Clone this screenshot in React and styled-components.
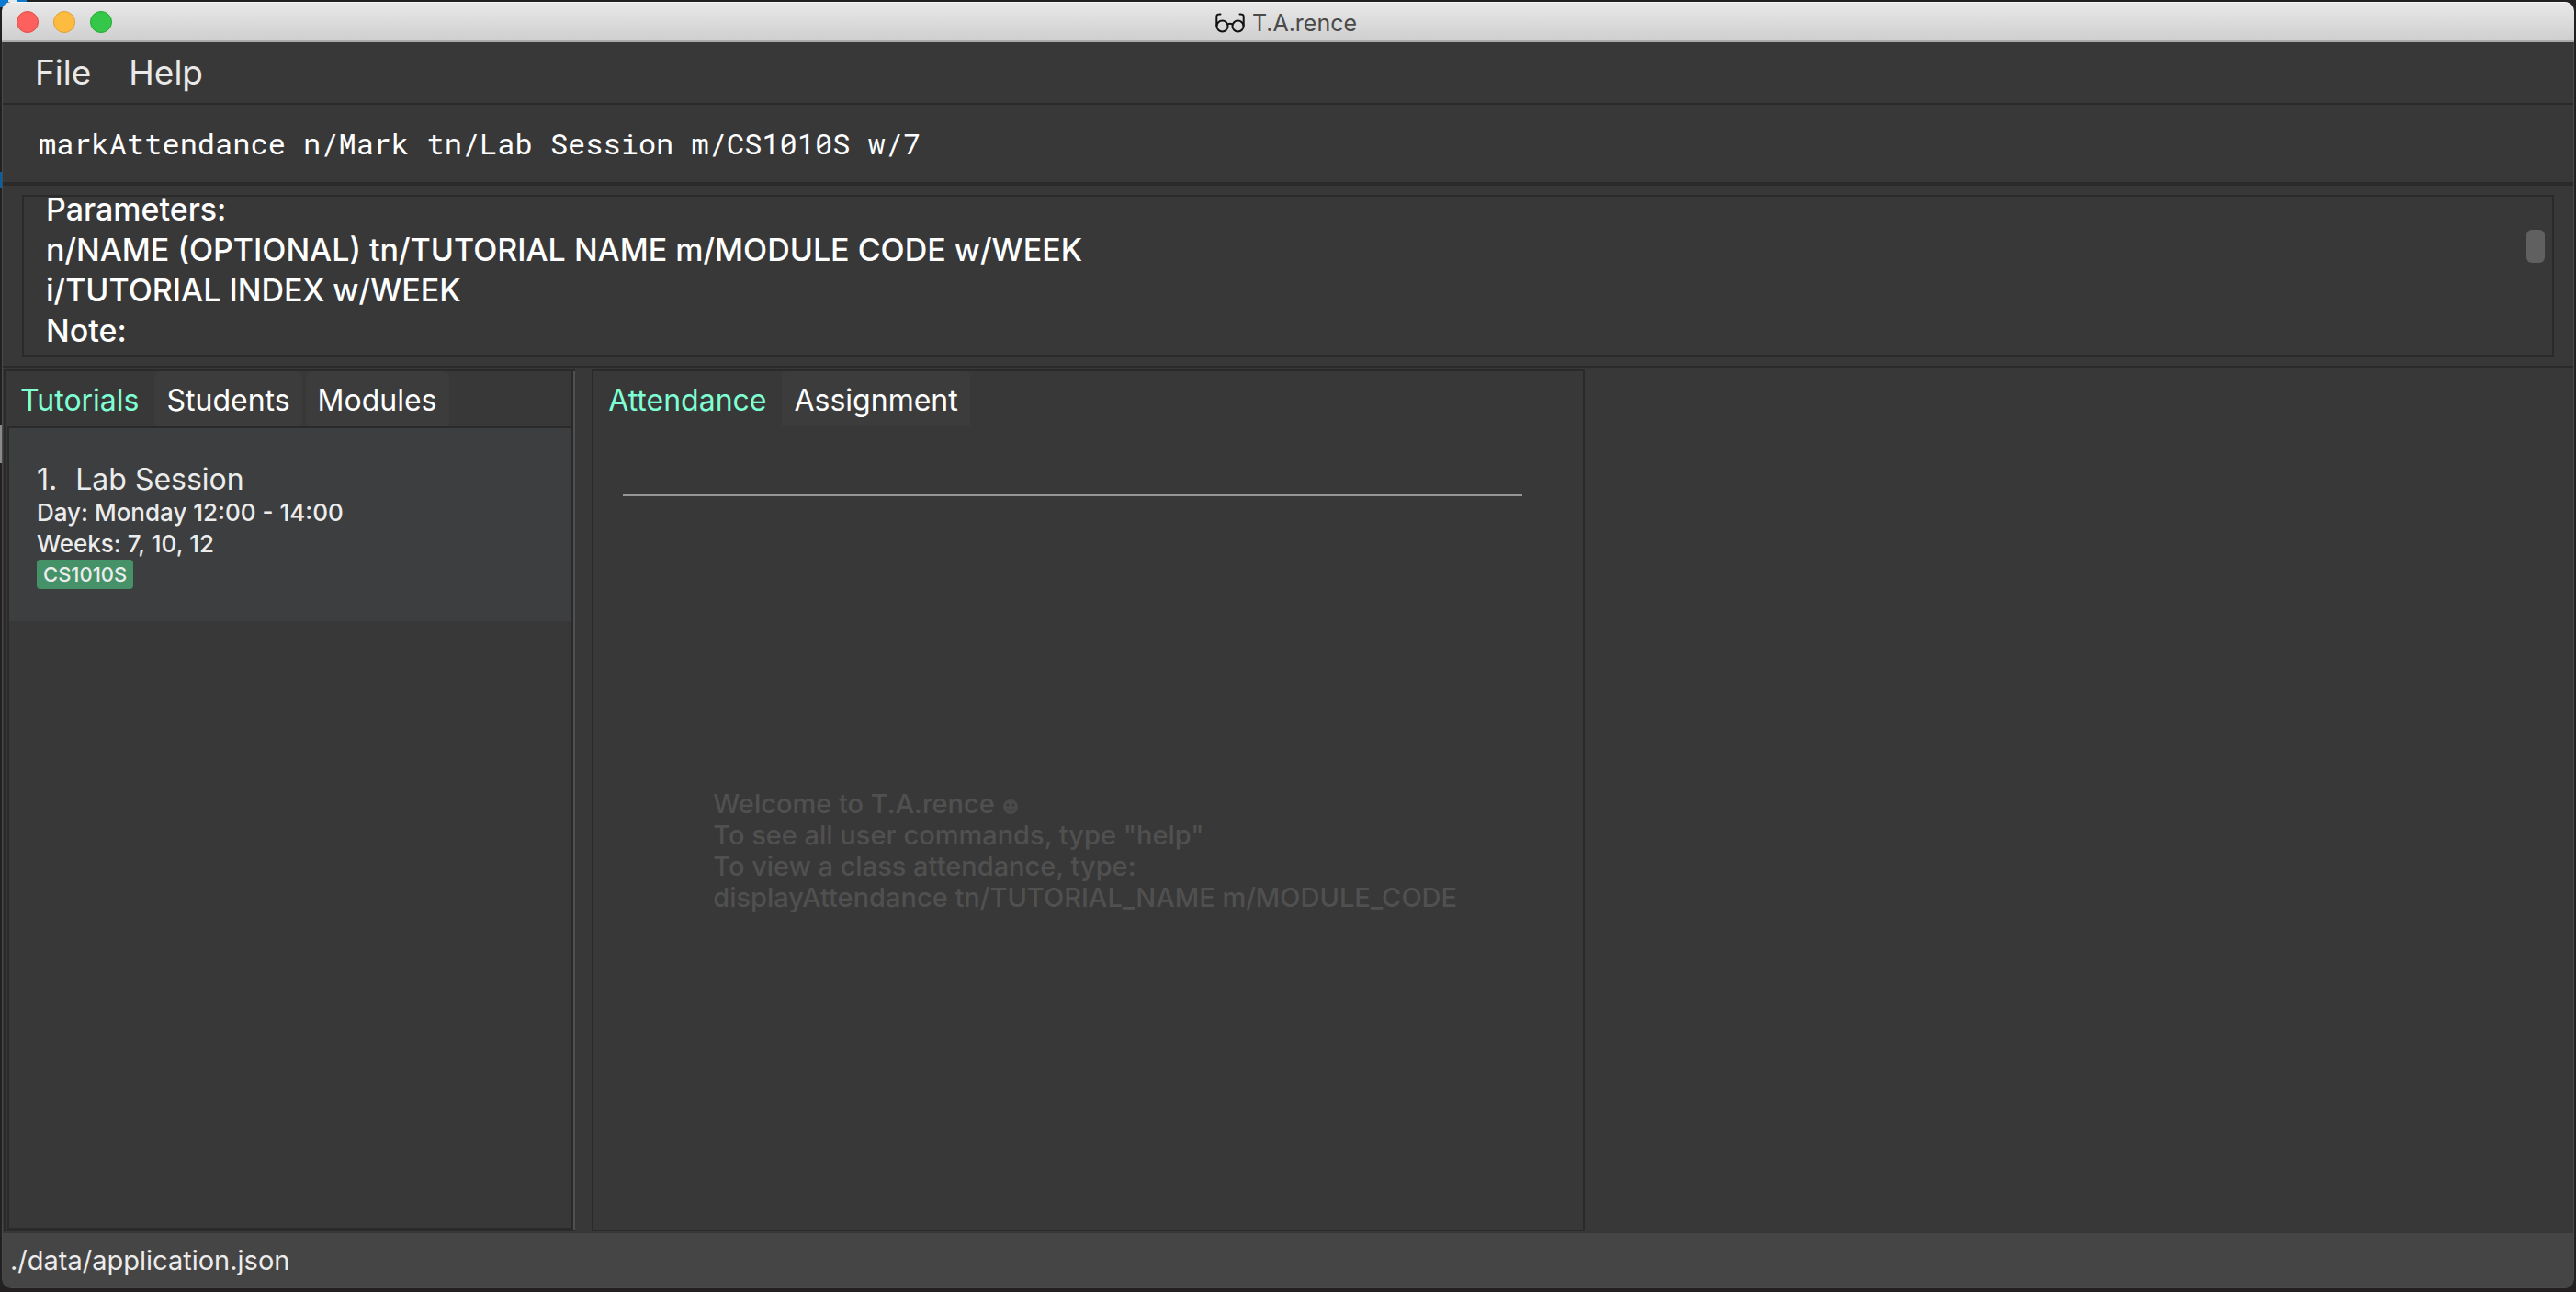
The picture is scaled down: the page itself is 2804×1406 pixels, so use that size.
import React, { useState } from 'react';
import styled, { createGlobalStyle } from 'styled-components';

const ink = '#383838';
const rule = '#2a2a2a';
const sans = "Inter, 'Liberation Sans', sans-serif";

const GlobalStyle = createGlobalStyle`
  * { box-sizing: border-box; }
  body { margin: 0; background: #1c1b1c; font-family: ${sans}; }
  button, input, textarea { font-family: inherit; }
  ul, p, h2 { margin: 0; padding: 0; }
`;

const Desktop = styled.div`
  display: flex;
  min-height: 100vh;
  padding: 2px 2px 4px;
  background:
    linear-gradient(90deg, #0a7bd0 0 9px, #dfe9f0 9px 18px, #0a7bd0 18px 29px, transparent 29px) 0 0 / 100% 2px no-repeat,
    linear-gradient(#0a7bd0, #0a7bd0) 0 0 / 8px 8px no-repeat,
    linear-gradient(#0a5f9e, #0a5f9e) 0 187px / 2px 18px no-repeat,
    linear-gradient(#8a8a8a, #8a8a8a) 0 462px / 2px 42px no-repeat,
    #222021;
`;

const Window = styled.main`
  display: flex;
  flex-direction: column;
  flex: 1;
  min-width: 0;
  border-radius: 10px;
  overflow: hidden;
  background: ${ink};
`;

const TitleBar = styled.header`
  display: grid;
  grid-template-columns: 1fr auto 1fr;
  align-items: center;
  height: 44px;
  padding: 0 16px;
  background: linear-gradient(#e8e8e8, #cfcfcf);
  border-top: 1px solid #f6f6f6;
  border-bottom: 2px solid #ababab;
`;

const Lights = styled.div`
  display: flex;
  gap: 16px;
`;

const Light = styled.button`
  width: 24px;
  height: 24px;
  padding: 0;
  border: 1px solid ${(p) => p.$edge};
  border-radius: 50%;
  background: ${(p) => p.$fill};
`;

const Title = styled.div`
  display: flex;
  align-items: center;
  gap: 8px;
  padding: 2px 4px 0 0;
  color: #4a4a4a;
  font-size: 25px;
  line-height: 32px;
`;

const Body = styled.div`
  display: flex;
  flex-direction: column;
  flex: 1;
  border: 1px solid #4a4a4a;
  border-top: 0;
  border-radius: 0 0 10px 10px;
  overflow: hidden;
`;

const MenuBar = styled.nav`
  display: flex;
  gap: 41px;
  height: 68px;
  padding: 0 35px 1px;
  border-bottom: 2px solid ${rule};
`;

const MenuButton = styled.button`
  padding: 0;
  border: 0;
  background: none;
  color: #e9e9e9;
  font-size: 37px;
`;

const CommandRow = styled.div`
  height: 88px;
  padding: 0 39px 2px;
  border-bottom: 4px solid ${rule};
`;

const CommandInput = styled.input`
  display: block;
  width: 100%;
  height: 100%;
  padding: 0;
  border: 0;
  outline: 0;
  background: none;
  color: #fff;
  && { font-family: 'Roboto Mono', 'Liberation Mono', monospace; }
  font-size: 32px;
`;

const ResultRow = styled.div`
  height: 198px;
  padding: 10px 21px;
  border-bottom: 2px solid ${rule};
`;

const ResultBox = styled.div`
  position: relative;
  display: flex;
  flex-direction: column;
  justify-content: flex-end;
  height: 176px;
  padding: 0 24px 4px;
  border: 2px solid ${rule};
  overflow: hidden;
`;

const ResultText = styled.textarea`
  flex: none;
  width: 100%;
  height: 176px;
  padding: 0;
  border: 0;
  outline: 0;
  resize: none;
  overflow: hidden;
  background: none;
  color: #fff;
  font-size: 34px;
  font-weight: 450;
  line-height: 44px;
`;

const ScrollThumb = styled.div`
  position: absolute;
  top: 36px;
  right: 8px;
  width: 20px;
  height: 36px;
  border-radius: 6px;
  background: #606060;
`;

const Panels = styled.div`
  display: grid;
  grid-template-columns: minmax(0, 622fr) minmax(0, 1080fr) minmax(0, 1058fr);
  column-gap: 18px;
  flex: 1;
  padding: 2px 0 2px 1px;
`;

const Sidebar = styled.section`
  display: flex;
  flex-direction: column;
  border: 2px solid ${rule};
  border-right: 0;
  box-shadow: inset -2px 0 #505050, inset -4px 0 ${rule};
  padding-right: 4px;
`;

const TabPane = styled.section`
  display: flex;
  flex-direction: column;
  border: 2px solid ${rule};
`;

const TabList = styled.div`
  display: flex;
  gap: 4px;
  height: 60px;
  padding-left: 3px;
`;

const Tab = styled.button`
  padding: 2px 13px 0;
  border: 0;
  border-radius: 6px 6px 0 0;
  background: ${(p) => (p.$active ? 'none' : '#3c3c3c')};
  color: ${(p) => (p.$active ? '#7fffd4' : '#fff')};
  font-size: 32px;
  font-weight: 400;
`;

const List = styled.ul`
  flex: 1;
  margin-left: 2px;
  border: 2px solid ${rule};
  border-right: 0;
  list-style: none;
`;

const Card = styled.li`
  height: 210px;
  padding: 37px 30px;
  background: #3c3e3f;
  color: #ececec;
`;

const CardTitle = styled.h2`
  display: flex;
  gap: 20px;
  font-size: 32px;
  font-weight: 400;
  line-height: 38px;
`;

const CardLine = styled.p`
  font-size: 26px;
  font-weight: 450;
  line-height: 34px;
`;

const Tag = styled.span`
  display: block;
  width: fit-content;
  padding: 0 7px;
  border-radius: 4px;
  background: #459168;
  font-size: 22px;
  font-weight: 450;
  line-height: 32px;
`;

const Content = styled.div`
  display: flex;
  flex-direction: column;
  flex: 1;
  padding: 74px 66px 0 32px;
`;

const Divider = styled.hr`
  width: 100%;
  height: 2px;
  margin: 0;
  border: 0;
  background: #969696;
`;

const Welcome = styled.div`
  margin: 318px 0 0 98px;
  color: #505050;
  font-size: 29px;
  font-weight: 450;
  line-height: 34px;
  white-space: nowrap;
`;

const Smile = styled.svg`
  margin-left: 8px;
  vertical-align: -1px;
`;

const StatusBar = styled.footer`
  height: 59px;
  padding: 0 8px;
  background: #454545;
  color: #ececec;
  font-size: 29px;
  line-height: 60px;
`;

const result = `Parameters:
n/NAME (OPTIONAL) tn/TUTORIAL NAME m/MODULE CODE w/WEEK
i/TUTORIAL INDEX w/WEEK
Note:`;

const tutorials = [
  { name: 'Lab Session', day: 'Monday 12:00 - 14:00', weeks: '7, 10, 12', module: 'CS1010S' },
];

function Glasses() {
  return (
    <svg width="32" height="22" viewBox="0 0 32 22" fill="none" stroke="#111" strokeWidth="2" strokeLinecap="round" aria-hidden="true">
      <circle cx="7.5" cy="14.5" r="6" />
      <circle cx="24.5" cy="14.5" r="6" />
      <path d="M13.500 12.500q2.500-1.500 5 0M1.300 14V4Q1.300 1.200 5.500 1.500M30.700 14V4Q30.700 1.200 26.500 1.500" />
    </svg>
  );
}

function Tabs({ names, active, onSelect }) {
  return (
    <TabList role="tablist">
      {names.map((name) => (
        <Tab key={name} role="tab" aria-selected={name === active} $active={name === active} onClick={() => onSelect(name)}>
          {name}
        </Tab>
      ))}
    </TabList>
  );
}

export default function App() {
  const [command, setCommand] = useState('markAttendance n/Mark tn/Lab Session m/CS1010S w/7');
  const [listTab, setListTab] = useState('Tutorials');
  const [viewTab, setViewTab] = useState('Attendance');
  return (
    <Desktop>
      <GlobalStyle />
      <Window>
        <TitleBar>
          <Lights>
            <Light aria-label="Close" $fill="#fc615d" $edge="#e04a45" />
            <Light aria-label="Minimize" $fill="#fdbc40" $edge="#de9f34" />
            <Light aria-label="Zoom" $fill="#34c749" $edge="#26a934" />
          </Lights>
          <Title><Glasses />T.A.rence</Title>
        </TitleBar>
        <Body>
          <MenuBar>
            <MenuButton>File</MenuButton>
            <MenuButton>Help</MenuButton>
          </MenuBar>
          <CommandRow>
            <CommandInput aria-label="Command" spellCheck={false} value={command} onChange={(e) => setCommand(e.target.value)} />
          </CommandRow>
          <ResultRow>
            <ResultBox>
              <ResultText aria-label="Result" readOnly spellCheck={false} value={result} />
              <ScrollThumb />
            </ResultBox>
          </ResultRow>
          <Panels>
            <Sidebar>
              <Tabs names={['Tutorials', 'Students', 'Modules']} active={listTab} onSelect={setListTab} />
              <List>
                {tutorials.map((t, i) => (
                  <Card key={t.name}>
                    <CardTitle><span>{i + 1}.</span><span>{t.name}</span></CardTitle>
                    <CardLine>Day: {t.day}</CardLine>
                    <CardLine>Weeks: {t.weeks}</CardLine>
                    <Tag>{t.module}</Tag>
                  </Card>
                ))}
              </List>
            </Sidebar>
            <TabPane>
              <Tabs names={['Attendance', 'Assignment']} active={viewTab} onSelect={setViewTab} />
              <Content>
                <Divider />
                <Welcome>
                  <p>
                    Welcome to T.A.rence
                    <Smile width="18" height="16" viewBox="0 0 18 16" aria-hidden="true">
                      <circle cx="9" cy="8" r="8" fill="#4a4a4a" />
                      <circle cx="6" cy="6" r="1.500" fill="#383838" />
                      <circle cx="12" cy="6" r="1.500" fill="#383838" />
                      <path d="M5 10q4 4 8 0" fill="none" stroke="#404040" strokeWidth="1.500" />
                    </Smile>
                  </p>
                  <p>To see all user commands, type "help"</p>
                  <p>To view a class attendance, type:</p>
                  <p>displayAttendance tn/TUTORIAL_NAME m/MODULE_CODE</p>
                </Welcome>
              </Content>
            </TabPane>
          </Panels>
          <StatusBar>./data/application.json</StatusBar>
        </Body>
      </Window>
    </Desktop>
  );
}
